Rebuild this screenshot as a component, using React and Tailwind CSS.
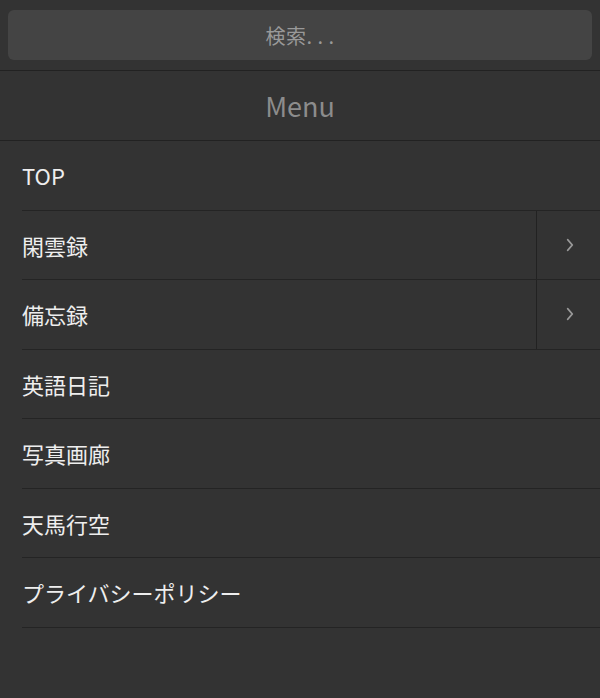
const ChevronRight = () => (
  <svg width="18" height="18" viewBox="0 0 24 24" fill="none" stroke="currentColor" strokeWidth="2.5" strokeLinecap="round" strokeLinejoin="round">
    <polyline points="9 5 15 12 9 19" />
  </svg>
);

const items = [
  { label: "TOP" },
  { label: "閑雲録", sub: true },
  { label: "備忘録", sub: true },
  { label: "英語日記" },
  { label: "写真画廊" },
  { label: "天馬行空" },
  { label: "プライバシーポリシー" },
];

export default function App() {
  return (
    <div
      className="w-[600px] h-[698px] bg-[#333333] text-[#eeeeee] overflow-hidden"
      style={{ fontFamily: '"Noto Sans CJK JP", "Noto Sans", sans-serif' }}
    >
      {/* search */}
      <div className="h-[71px] px-2 pt-[10px] border-b border-[#222222]">
        <input
          placeholder="検索. . ."
          className="w-full h-[50px] rounded-md bg-[#444444] text-center text-[20px] tracking-[0.5px] text-[#aaaaaa] placeholder:text-[#999999] outline-none"
        />
      </div>

      {/* title */}
      <div className="h-[70px] flex items-center justify-center pt-[2px] border-b border-[#222222] text-[27px] text-[#8c8c8c]">
        Menu
      </div>

      {/* items */}
      <ul>
        {items.map((item) => (
          <li key={item.label} className="ml-[22px] h-[69.5px] flex border-b border-[#242424]">
            <div className="flex-1 flex items-center pt-[1px] text-[22px]">{item.label}</div>
            {item.sub && (
              <div className="w-[64px] flex items-center justify-center pl-[2px] border-l border-[#222222] text-[#999999]">
                <ChevronRight />
              </div>
            )}
          </li>
        ))}
      </ul>
    </div>
  );
}
